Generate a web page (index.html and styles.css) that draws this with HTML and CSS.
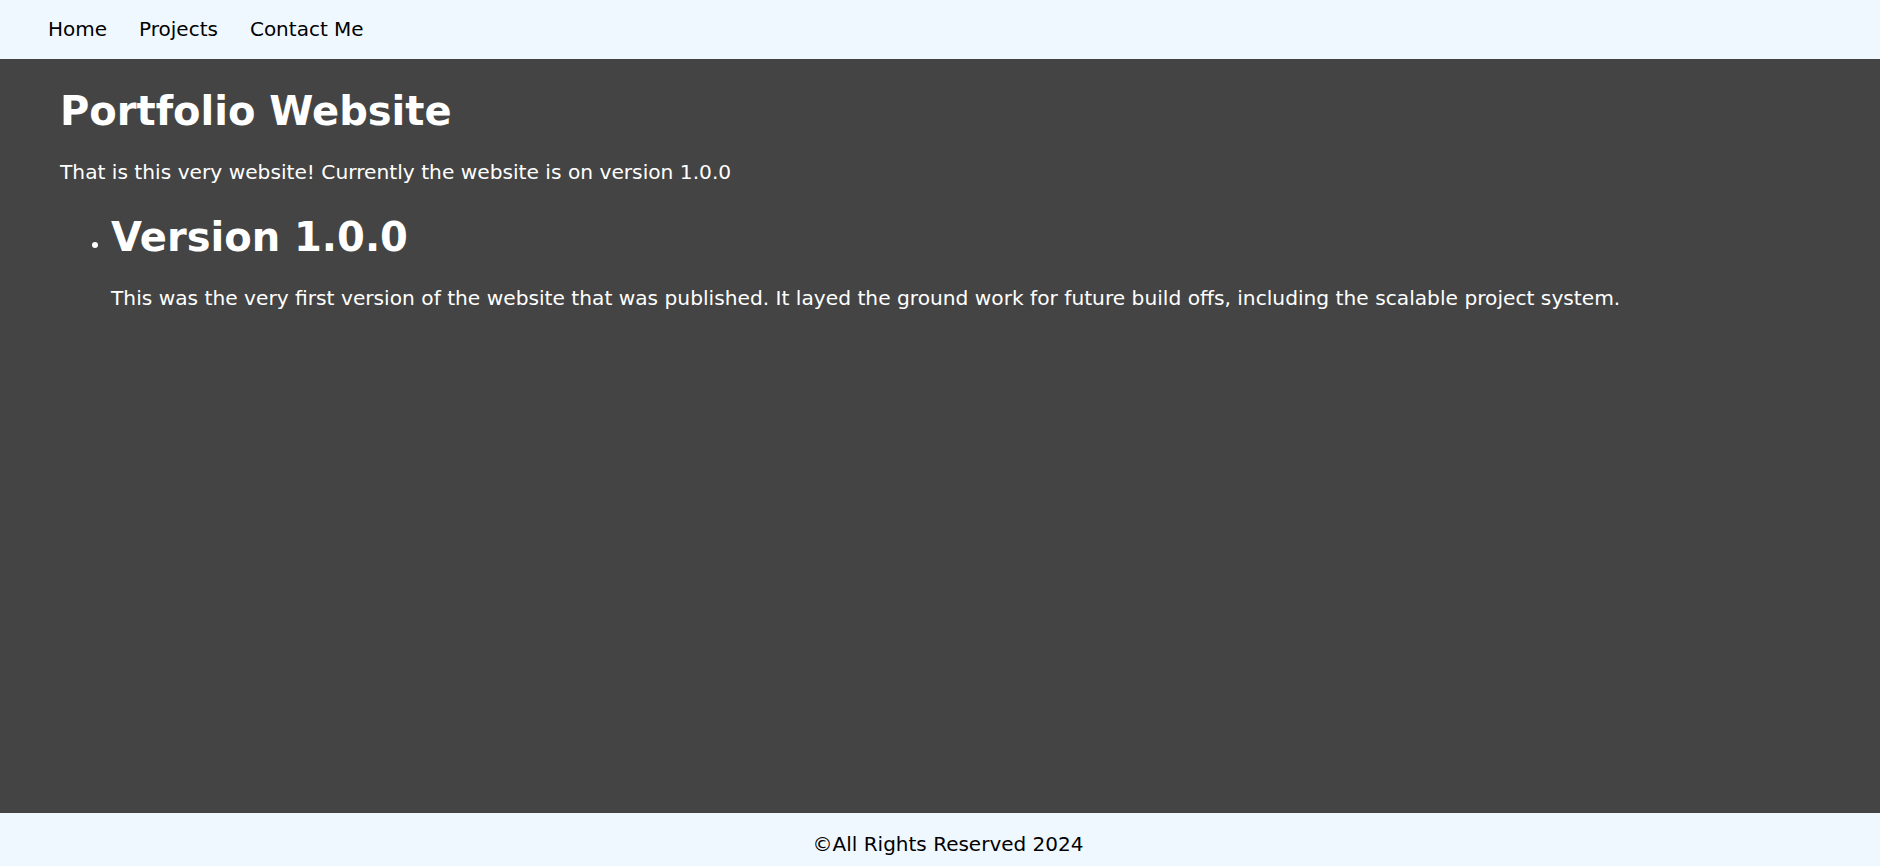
FILE: index.html
```html
<!DOCTYPE html>
<html lang="en">
<head>
<meta charset="utf-8">
<title>Portfolio Website</title>
<link rel="stylesheet" href="styles.css">
</head>
<body>
  <nav class="topnav">
    <a class="nav-link" href="#">Home</a>
    <a class="nav-link" href="#">Projects</a>
    <a class="nav-link" href="#">Contact Me</a>
  </nav>
  <main class="content">
    <h1 class="title">Portfolio Website</h1>
    <p class="intro">That is this very website! Currently the website is on version 1.0.0</p>
    <ul class="versions">
      <li class="version">
        <h2 class="version-title">Version 1.0.0</h2>
        <p class="version-text">This was the very first version of the website that was published. It layed the ground work for future build offs, including the scalable project system.</p>
      </li>
    </ul>
  </main>
  <footer class="footer">©All Rights Reserved 2024</footer>
</body>
</html>
```
FILE: styles.css
```css
html, body {
  margin: 0;
  padding: 0;
}
body {
  font-family: "DejaVu Sans", Verdana, sans-serif;
  font-size: 20px;
  min-height: 100vh;
  display: flex;
  flex-direction: column;
  background: #444444;
}
.topnav {
  background: #f0f8ff;
  height: 59px;
  display: flex;
  align-items: center;
  gap: 32px;
  padding-left: 48px;
  box-sizing: border-box;
}
.nav-link {
  color: #000;
  text-decoration: none;
  font-size: 20px;
  line-height: 24px;
  padding-bottom: 1px;
}
.content {
  flex: 1;
  background: #444444;
  color: #fff;
  padding: 28px 60px 0 60px;
}
.title {
  font-size: 40px;
  line-height: 48px;
  font-weight: bold;
  margin: 0;
}
.intro {
  font-size: 20.2px;
  line-height: 24px;
  margin: 25px 0 0 0;
}
.versions {
  margin: 29px 0 0 0;
  padding-left: 51px;
}
.version-title {
  font-size: 40px;
  line-height: 48px;
  font-weight: bold;
  margin: 0;
}
.version-text {
  font-size: 20.2px;
  line-height: 26px;
  margin: 24px 0 0 0;
}
.footer {
  background: #f0f8ff;
  color: #000;
  height: 53px;
  box-sizing: border-box;
  text-align: center;
  font-size: 20px;
  line-height: 24px;
  padding: 19px 0 0 16px;
}
```
